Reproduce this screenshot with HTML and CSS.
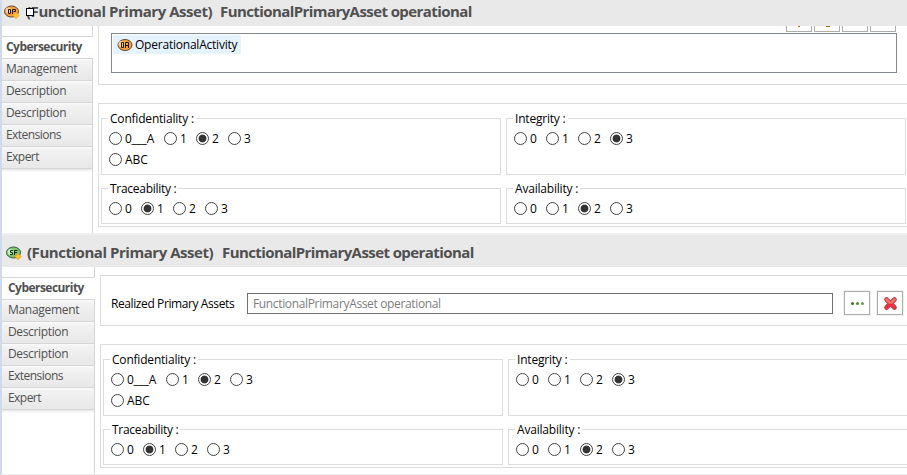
FILE: index.html
```
<!DOCTYPE html>
<html lang="en">
<head>
<meta charset="utf-8">
<title>Functional Primary Asset</title>
<link rel="stylesheet" href="styles.css">
</head>
<body>
<section class="panel top">
  <header class="bar">
    <svg class="icon" width="17" height="16" viewBox="0 0 17 16"><ellipse cx="7.500" cy="6.500" rx="7" ry="5.500" fill="#f9a03c" stroke="#5a4a38"/><ellipse cx="4.500" cy="5.500" rx="3" ry="3" fill="#ffd09a"/><path d="M4.500 4.500h2v4h-2zM8.500 9V4.500h3v2h-2" fill="none" stroke="#21160a"/><path d="M12 7.500l3 3-3 3-3-3z" fill="#ffc62e" stroke="#f0a030"/></svg>
    <h1><span class="kind">(Functional Primary Asset)</span><span class="name">FunctionalPrimaryAsset operational</span></h1>
    <i class="handle"></i>
  </header>
  <div class="main">
    <nav class="tabs">
      <div class="stub"></div>
      <div class="tab active">Cybersecurity</div>
      <div class="tab mgmt">Management</div><div class="tab desc">Description</div><div class="tab desc">Description</div><div class="tab ext">Extensions</div><div class="tab exp">Expert</div>
      <div class="rest"></div>
    </nav>
    <div class="content">
      <div class="section activities">
        <div class="tools"><b class="t1"></b><b class="t2"></b><b></b><b></b></div>
        <div class="list"><span class="item"><svg width="16" height="14" viewBox="0 0 16 14"><ellipse cx="8" cy="7" rx="7" ry="5.500" fill="#f9a03c" stroke="#5a4a38"/><ellipse cx="4.500" cy="6" rx="3" ry="3" fill="#ffd09a"/><path d="M4.500 4.500h2v5h-2zM8.500 10V4.500h3V10M9 7.500h2" fill="none" stroke="#21160a"/></svg><span class="activity">OperationalActivity</span></span></div>
      </div>
      <div class="section grid">
        <div class="group tall"><span class="legend conf">Confidentiality :</span><div class="row first"><i></i><span>0___A</span><i></i><span>1</span><i class="on"></i><span>2</span><i></i><span>3</span></div><div class="row second"><i></i><span class="abc">ABC</span></div></div>
        <div class="group tall"><span class="legend integ">Integrity :</span><div class="row"><i></i><span>0</span><i></i><span>1</span><i></i><span>2</span><i class="on"></i><span>3</span></div></div>
        <div class="group"><span class="legend trace">Traceability :</span><div class="row"><i></i><span>0</span><i class="on"></i><span>1</span><i></i><span>2</span><i></i><span>3</span></div></div>
        <div class="group"><span class="legend avail">Availability :</span><div class="row"><i></i><span>0</span><i></i><span>1</span><i class="on"></i><span>2</span><i></i><span>3</span></div></div>
      </div>
    </div>
  </div>
</section>
<section class="panel bottom">
  <header class="bar">
    <svg class="icon" width="17" height="16" viewBox="0 0 17 16"><ellipse cx="7.500" cy="6.500" rx="7" ry="5.500" fill="#79c66d" stroke="#355a3a"/><ellipse cx="4.500" cy="6" rx="3" ry="3" fill="#c2ecb9"/><path d="M7 4.500H4.500v2h2v2H4M8.500 9V4.500H11.500M8.500 6.500h2.500" fill="none" stroke="#122d16"/><path d="M12 7.500l3 3-3 3-3-3z" fill="#ffc62e" stroke="#f08a1c"/></svg>
    <h1><span class="kind">(Functional Primary Asset)</span><span class="name">FunctionalPrimaryAsset operational</span></h1>
  </header>
  <div class="main">
    <nav class="tabs">
      <div class="stub"></div>
      <div class="tab active">Cybersecurity</div>
      <div class="tab mgmt">Management</div><div class="tab desc">Description</div><div class="tab desc">Description</div><div class="tab ext">Extensions</div><div class="tab exp">Expert</div>
      <div class="rest"></div>
    </nav>
    <div class="content">
      <div class="section realized">
        <span class="label">Realized Primary Assets</span>
        <div class="field"><span>FunctionalPrimaryAsset operational</span></div>
        <div class="btn"><svg width="24" height="22" viewBox="0 0 24 22"><circle cx="7.500" cy="11.500" r="1.500" fill="#3c7414"/><circle cx="12.500" cy="11.500" r="1.500" fill="#4f8a26"/><circle cx="17.500" cy="11.500" r="1.500" fill="#6b9d4b"/></svg></div>
        <div class="btn"><svg width="24" height="22" viewBox="0 0 24 22"><path d="M8.500 7.500l8 8M16.500 7.500l-8 8" stroke="#b5403c" stroke-width="4.600" stroke-linecap="round"/><path d="M8.500 7.500l8 8M16.500 7.500l-8 8" stroke="#ee2f40" stroke-width="3.200" stroke-linecap="round"/><path d="M8.500 7.500l3 3M16.500 7.500l-3 3" stroke="#ef716a" stroke-width="2.500" stroke-linecap="round"/></svg></div>
      </div>
      <div class="section grid">
        <div class="group tall"><span class="legend conf">Confidentiality :</span><div class="row first"><i></i><span>0___A</span><i></i><span>1</span><i class="on"></i><span>2</span><i></i><span>3</span></div><div class="row second"><i></i><span class="abc">ABC</span></div></div>
        <div class="group tall"><span class="legend integ">Integrity :</span><div class="row"><i></i><span>0</span><i></i><span>1</span><i></i><span>2</span><i class="on"></i><span>3</span></div></div>
        <div class="group"><span class="legend trace">Traceability :</span><div class="row"><i></i><span>0</span><i class="on"></i><span>1</span><i></i><span>2</span><i></i><span>3</span></div></div>
        <div class="group"><span class="legend avail">Availability :</span><div class="row"><i></i><span>0</span><i></i><span>1</span><i class="on"></i><span>2</span><i></i><span>3</span></div></div>
      </div>
    </div>
  </div>
</section>
</body>
</html>
```
FILE: styles.css
```
* { box-sizing: border-box; }
body { margin: 0; width: 907px; height: 475px; overflow: hidden; background: #fff; color: #000; font: 12px/16px "Open Sans", "Noto Sans", sans-serif; }
.panel { border-left: 2px solid #cfdaeb; display: flex; flex-direction: column; overflow: hidden; }
.top { height: 233px; }
.bottom { height: 242px; border-bottom: 1px solid #ececec; }
.bar { position: relative; flex: none; display: flex; background: #e9e9e9; }
.top .bar { height: 26px; padding: 5px 0 0 2px; }
.bottom .bar { height: 34px; border-top: 2px solid #f0f0f0; padding: 11px 0 0 4px; }
.icon { flex: none; }
h1 { margin: -5px 0 0 5px; font-size: 15px; line-height: 22px; font-weight: 700; color: #505050; white-space: nowrap; display: flex; }
.bottom h1 { margin: -5px 0 0 4px; }
.kind { width: 194px; letter-spacing: -0.460px; }
.bottom .kind { width: 195px; }
.name { letter-spacing: -0.580px; }
.handle { position: absolute; left: 24px; top: 8px; width: 8px; height: 8px; border: 1px solid #000; background: #fff; }
.main { display: flex; flex: 1; min-height: 0; }
.tabs { width: 91px; flex: none; display: flex; flex-direction: column; color: #505050; }
.bottom .tabs { width: 93px; }
.stub { height: 11px; flex: none; border-right: 1px solid #d6d6d6; border-bottom: 1px solid #d6d6d6; }
.tab { height: 22px; flex: none; border-top: 1px solid #d6d6d6; border-right: 1px solid #d6d6d6; padding: 2px 0 0 4px; white-space: nowrap; background: linear-gradient(#fafafa 0, #f2f2f2 3px, #e8e8e8); }
.bottom .tab { padding-left: 6px; }
.tab.active { height: 21px; border: 0; background: #fff; font-weight: 700; letter-spacing: -0.540px; }
.mgmt { letter-spacing: -0.300px; }
.desc { letter-spacing: -0.350px; }
.ext, .exp { letter-spacing: -0.550px; }
.rest { flex: 1; border-top: 1px solid #d6d6d6; border-right: 1px solid #d6d6d6; background: linear-gradient(#e5e5e5, #fff 3px); }
.content { flex: 1; min-width: 0; padding-left: 5px; }
.section { border: 1px solid #dcdcdc; border-right: 0; }
.activities { height: 59px; border-top: 0; padding-left: 12px; margin-bottom: 18px; }
.tools { height: 7px; display: flex; gap: 2px; margin-left: 675px; }
.tools b { width: 26px; height: 6px; border: 1px solid #adadad; border-top: 0; }
.tools .t1, .tools .t2 { background: linear-gradient(#a96f08, #a96f08) 11px 0 / 2px 1px no-repeat; }
.tools .t2 { background-size: 4px 1px; }
.list { width: 786px; height: 40px; border: 1px solid #828790; padding: 1px; }
.item { display: flex; width: 128px; height: 19px; align-items: center; background: #e5f3ff; padding-left: 4px; }
.activity { margin-left: 2px; letter-spacing: -0.220px; }
.grid { height: 124px; padding: 14px 0 0 2px; display: grid; grid-template-columns: 400px 400px; grid-template-rows: 57px 36px; gap: 13px 5px; }
.group { position: relative; border: 1px solid #dcdcdc; padding: 13px 0 0 7px; }
.legend { position: absolute; left: 6px; top: -8px; background: #fff; padding: 0 2px; white-space: nowrap; letter-spacing: -0.200px; }
.trace { letter-spacing: -0.280px; }
.row { display: flex; align-items: center; height: 13px; }
.row i { width: 13px; height: 13px; flex: none; border: 1px solid #444; border-radius: 50%; }
.row i.on { background: radial-gradient(circle, #333 0 3.500px, #fff 4.300px); }
.row span { width: 16px; margin-left: 3px; }
.row.first span:first-of-type { width: 39px; letter-spacing: -0.250px; }
.row.second { margin-top: 8px; }
.row .abc { width: auto; }
.realized { height: 51px; margin: 8px 0 18px; padding: 0 0 0 10px; display: flex; align-items: center; }
.label { width: 136px; white-space: nowrap; letter-spacing: -0.400px; padding-top: 6px; }
.field { width: 586px; height: 21px; margin: 6px 11px 0 0; border: 1px solid #707070; padding: 2px 5px 0; color: #7d7d7d; letter-spacing: -0.350px; }
.btn { width: 26px; height: 24px; border: 1px solid #adadad; margin: 4px 0 0 0; box-shadow: 0 0 0 1px #f0f0f0; }
.btn + .btn { margin-left: 7px; }
.btn svg { display: block; }
```
